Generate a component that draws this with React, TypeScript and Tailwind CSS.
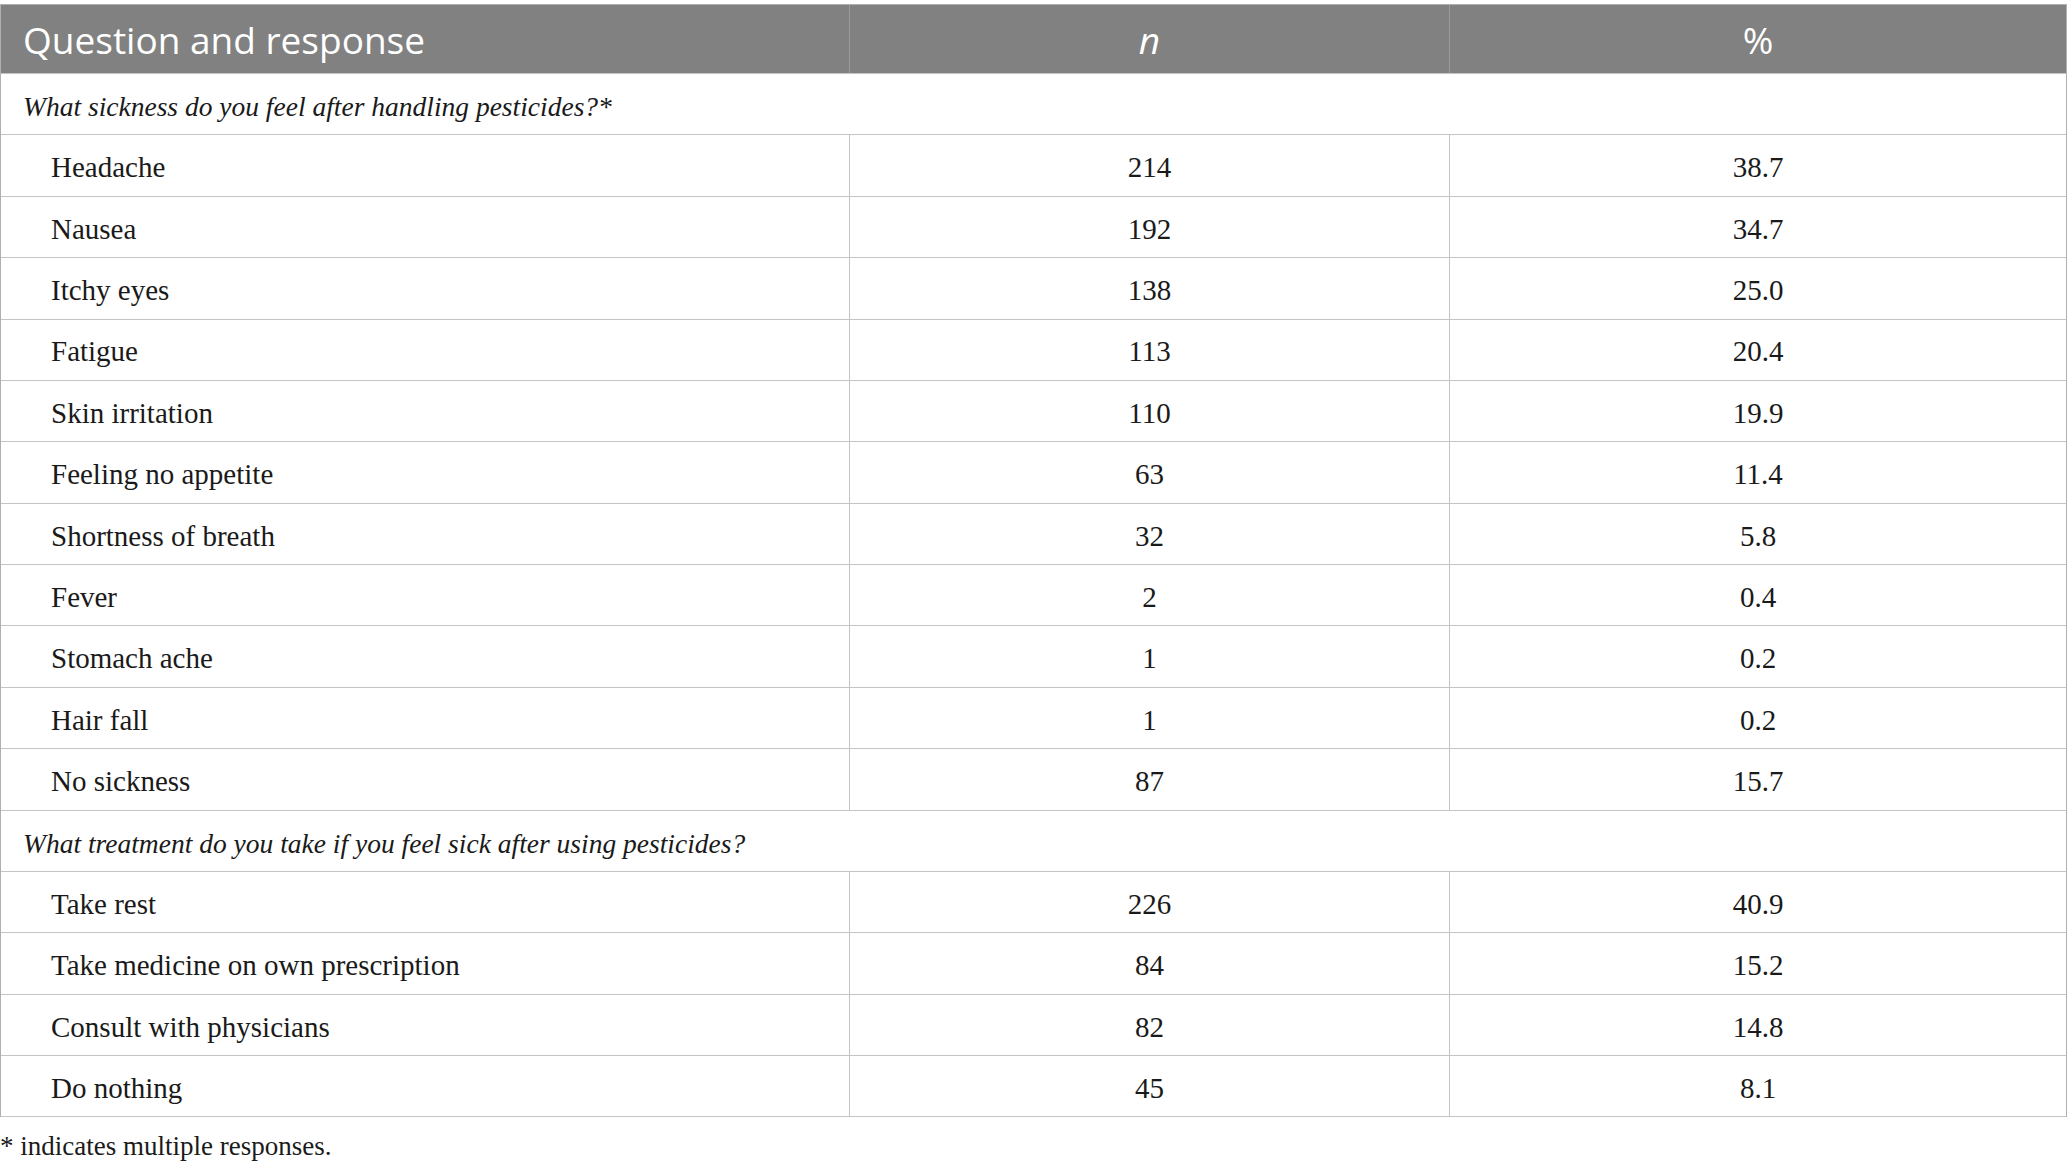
import React from "react";

type Row = { label: string; n: string; pct: string };

const sickness: Row[] = [
  { label: "Headache", n: "214", pct: "38.7" },
  { label: "Nausea", n: "192", pct: "34.7" },
  { label: "Itchy eyes", n: "138", pct: "25.0" },
  { label: "Fatigue", n: "113", pct: "20.4" },
  { label: "Skin irritation", n: "110", pct: "19.9" },
  { label: "Feeling no appetite", n: "63", pct: "11.4" },
  { label: "Shortness of breath", n: "32", pct: "5.8" },
  { label: "Fever", n: "2", pct: "0.4" },
  { label: "Stomach ache", n: "1", pct: "0.2" },
  { label: "Hair fall", n: "1", pct: "0.2" },
  { label: "No sickness", n: "87", pct: "15.7" },
];

const treatment: Row[] = [
  { label: "Take rest", n: "226", pct: "40.9" },
  { label: "Take medicine on own prescription", n: "84", pct: "15.2" },
  { label: "Consult with physicians", n: "82", pct: "14.8" },
  { label: "Do nothing", n: "45", pct: "8.1" },
];

const serif = "font-['Liberation_Serif',serif]";

function DataRow({ r }: { r: Row }) {
  return (
    <div className="grid grid-cols-[849px_600px_1fr] h-[61.375px] border-b border-[#c4c4c4]">
      <div className="flex items-center pl-[50px] pt-[5px] border-r border-[#c4c4c4]">{r.label}</div>
      <div className="flex items-center justify-center pt-[5px] border-r border-[#c4c4c4]">{r.n}</div>
      <div className="flex items-center justify-center pt-[5px]">{r.pct}</div>
    </div>
  );
}

function SectionRow({ text }: { text: string }) {
  return (
    <div className="flex items-center h-[61.375px] border-b border-[#c4c4c4] pl-[22px] pt-[5px] italic text-[27.5px]">
      {text}
    </div>
  );
}

export default function App() {
  return (
    <div className="w-[2067px] h-[1171px] bg-white overflow-hidden">
      <div className={`mt-[4px] border-t border-x border-[#b0b0b0] text-[29px] text-[#1a1a1a] ${serif}`}>
        <div className="grid grid-cols-[849px_600px_1fr] h-[69px] bg-[#808180] border-b border-[#c4c4c4] text-white font-['Open_Sans',sans-serif] text-[37px]">
          <div className="flex items-center pl-[22px] pt-[2px] border-r border-[#9a9a9a]">Question and response</div>
          <div className="flex items-center justify-center pt-[2px] border-r border-[#9a9a9a] italic">n</div>
          <div className="flex items-center justify-center pt-[2px]">%</div>
        </div>
        <SectionRow text="What sickness do you feel after handling pesticides?*" />
        {sickness.map((r) => (
          <DataRow key={r.label} r={r} />
        ))}
        <SectionRow text="What treatment do you take if you feel sick after using pesticides?" />
        {treatment.map((r) => (
          <DataRow key={r.label} r={r} />
        ))}
      </div>
      <div className={`mt-[13px] text-[27px] leading-[32px] text-[#1a1a1a] ${serif}`}>* indicates multiple responses.</div>
    </div>
  );
}
